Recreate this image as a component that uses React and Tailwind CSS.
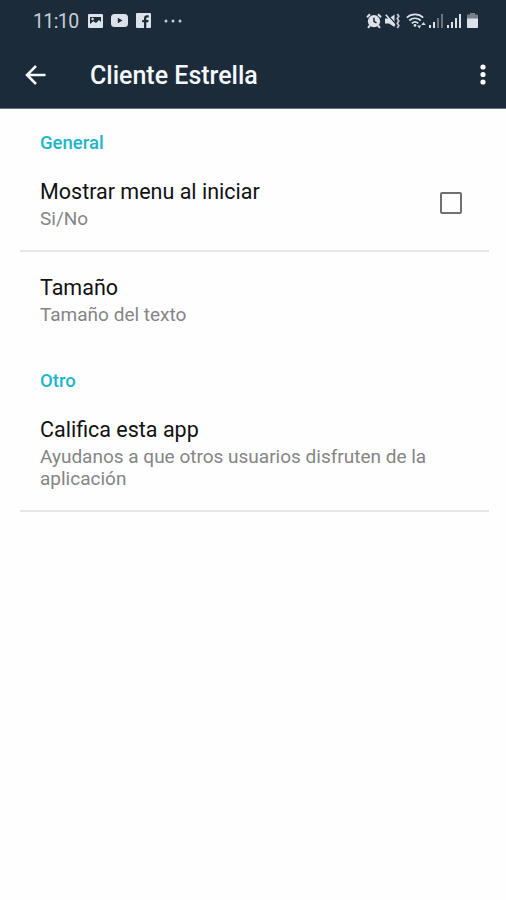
const GalleryIcon = () => (
  <svg width="15" height="14" viewBox="0 0 15 14">
    <rect width="15" height="14" rx="1" fill="#dbe2e9" />
    <path d="M2 3h11v5l-2-2-3 3-2.6-1.8L2 10z" fill="#1c2b39" />
    <circle cx="4.6" cy="5" r="1.2" fill="#dbe2e9" />
  </svg>
);

const VideoIcon = () => (
  <svg width="17" height="13" viewBox="0 0 17 13">
    <rect width="17" height="13" rx="3.5" fill="#dbe2e9" />
    <path d="M6.8 3.8v5.4l4.7-2.7z" fill="#1c2b39" />
  </svg>
);

const FacebookIcon = () => (
  <svg width="15" height="15" viewBox="0 0 15 15">
    <rect width="15" height="15" rx="1" fill="#dbe2e9" />
    <path d="M8 15V9.3H6.2V7H8V5.4C8 3.4 9.2 2.3 11 2.3h1.7v2.1h-1.2c-.9 0-1.2.4-1.2 1.2V7h2.3l-.3 2.3h-2V15z" fill="#1c2b39" />
  </svg>
);

const AlarmIcon = () => (
  <svg width="16" height="16" viewBox="0 0 16 16">
    <path d="M1 4.2 4 1.2M15 4.2l-3-3M4 12.5l-2 2.3M12 12.5l2 2.3" stroke="#dbe2e9" strokeWidth="2" />
    <circle cx="8" cy="8.2" r="6.1" fill="#dbe2e9" />
    <path d="M8 4.8v3.7l2.5 1.4" stroke="#1c2b39" strokeWidth="1.5" fill="none" />
  </svg>
);

const MuteIcon = () => (
  <svg width="15" height="16" viewBox="0 0 15 16">
    <path d="M0 5.5h4l5.5-4V14L4 10.5H0z" fill="#dbe2e9" />
    <path d="m3 2.5 7 7.500" stroke="#1c2b39" strokeWidth="1.2" />
    <path d="M.8 1.8 10 12.5" stroke="#dbe2e9" strokeWidth="1.6" />
    <path d="m12.3 1 1.5 2.3-1.5 2.3L13.8 8l-1.5 2.3 1.5 2.3-1.5 2.4" stroke="#c5ced6" strokeWidth="1.7" fill="none" />
  </svg>
);

const WifiIcon = () => (
  <svg width="20" height="16" viewBox="0 0 20 16">
    <g stroke="#dbe2e9" strokeWidth="1.7" fill="none">
      <path d="M.8 4.6c4.6-4.2 11.8-4.2 16.4 0" />
      <path d="M3.3 7.5c3.3-3 8.1-3 11.4 0" />
      <path d="M5.8 10.3c1.9-1.7 4.5-1.7 6.4 0" />
    </g>
    <circle cx="9" cy="12.4" r="1.4" fill="#dbe2e9" />
    <path d="M11.3 12.4h4l-2 3zM15.3 11.9h4.4l-2.2-3z" fill="#dbe2e9" />
  </svg>
);

const SignalIcon = ({ dim }) => (
  <svg width="14" height="14" viewBox="0 0 14 14" fill="#dbe2e9">
    <rect x="0" y="11" width="2" height="3" />
    <rect x="4" y="8" width="2" height="6" />
    <rect x="8" y="4" width="2" height="10" opacity={dim ? 0.4 : 1} />
    <rect x="12" y="0" width="2" height="14" opacity={dim ? 0.4 : 1} />
  </svg>
);

const BatteryIcon = () => (
  <svg width="11" height="15" viewBox="0 0 11 15">
    <path d="M3 0h5v1.5h2c.6 0 1 .4 1 1V6H0V2.5c0-.6.4-1 1-1h2z" fill="#75808a" />
    <path d="M0 5.5h11V14c0 .6-.4 1-1 1H1c-.6 0-1-.4-1-1z" fill="#dbe2e9" />
  </svg>
);

const StatusBar = () => (
  <div className="flex h-[41px] items-center justify-between pl-[33px] pr-[28px] text-[#c5ced6]">
    <div className="flex items-center">
      <span className="w-[55px] pt-0.5 text-[19.5px] leading-none tracking-[-0.6px]">11:10</span>
      <div className="flex items-center gap-2">
        <GalleryIcon />
        <VideoIcon />
        <FacebookIcon />
      </div>
      <svg className="ml-[13px]" width="18" height="4" viewBox="0 0 18 4" fill="#c5ced6">
        <circle cx="2" cy="2" r="1.5" />
        <circle cx="9" cy="2" r="1.5" />
        <circle cx="16" cy="2" r="1.5" />
      </svg>
    </div>
    <div className="flex items-center">
      <AlarmIcon />
      <span className="ml-[3px]"><MuteIcon /></span>
      <span className="ml-[6px]"><WifiIcon /></span>
      <span className="ml-[3px]"><SignalIcon dim /></span>
      <span className="ml-[4px]"><SignalIcon /></span>
      <span className="ml-[6px]"><BatteryIcon /></span>
    </div>
  </div>
);

const AppBar = () => (
  <div className="flex h-[67px] items-center pl-[25px] pr-5">
    <button type="button" aria-label="Atrás">
      <svg width="21" height="20" viewBox="0 0 21 20" fill="none" stroke="#f4f8fb" strokeWidth="2.5">
        <path d="M20.5 10H2M11 1 2 10l9 9" />
      </svg>
    </button>
    <h1 className="ml-[44px] flex-1 pt-0.5 text-[25px] font-medium leading-none text-[#f4f8fb]">Cliente Estrella</h1>
    <button type="button" aria-label="Más opciones">
      <svg width="6" height="22" viewBox="0 0 6 22" fill="#fff">
        <circle cx="3" cy="3" r="2.6" />
        <circle cx="3" cy="10.5" r="2.6" />
        <circle cx="3" cy="18" r="2.6" />
      </svg>
    </button>
  </div>
);

const SectionTitle = ({ children }) => (
  <h2 className="px-10 text-[18.5px] font-medium leading-[22px] text-[#1bb6c8]">{children}</h2>
);

const Preference = ({ title, summary, children }) => (
  <div className="flex items-center justify-between pl-10 pr-11">
    <div className="w-[400px] pt-px">
      <div className="text-[21.5px] leading-[28px] text-[#111]">{title}</div>
      <div className="mt-[2px] text-[19px] leading-[22px] text-[#858585]">{summary}</div>
    </div>
    {children}
  </div>
);

const Divider = () => <div className="ml-5 mr-[17px] mt-5 h-[2px] bg-[#e6e6e6]" />;

const App = () => (
  <div className="h-[900px] w-[506px] overflow-hidden bg-[#fefefe] font-['Roboto',sans-serif]">
    <header className="h-[109px] border-b border-[#66717b] bg-[#1c2b39]">
      <StatusBar />
      <AppBar />
    </header>
    <main className="pt-[23px]">
      <SectionTitle>General</SectionTitle>
      <div className="mt-[23px]">
        <Preference title="Mostrar menu al iniciar" summary="Si/No">
          <button
            type="button"
            role="checkbox"
            aria-checked="false"
            aria-label="Mostrar menu al iniciar"
            className="mb-0.5 h-[22px] w-[22px] shrink-0 rounded-[2px] border-2 border-[#707070]"
          />
        </Preference>
      </div>
      <Divider />
      <div className="mt-[21px]">
        <Preference title="Tamaño" summary="Tamaño del texto" />
      </div>
      <div className="mt-[44px]">
        <SectionTitle>Otro</SectionTitle>
      </div>
      <div className="mt-[23px]">
        <Preference title="Califica esta app" summary="Ayudanos a que otros usuarios disfruten de la aplicación" />
      </div>
      <Divider />
    </main>
  </div>
);

export default App;
